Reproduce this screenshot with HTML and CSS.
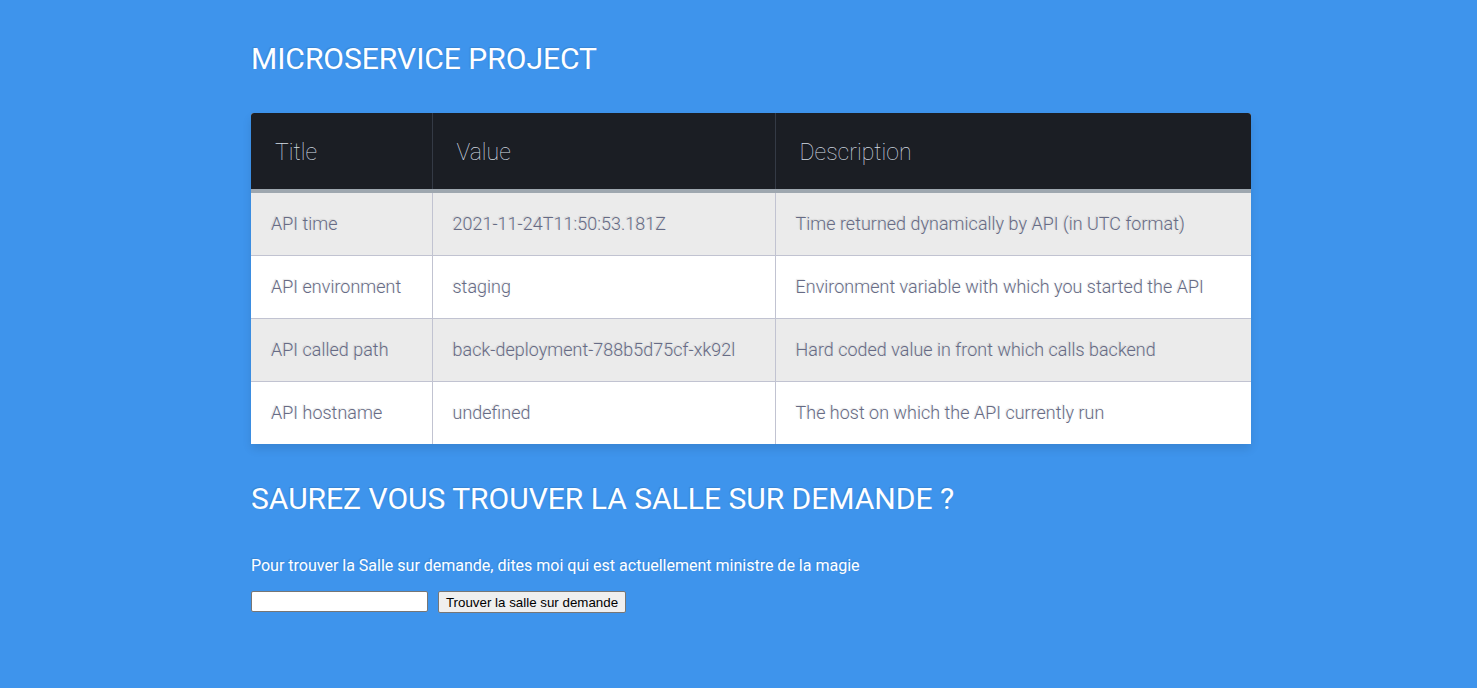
FILE: index.html
```html
<!DOCTYPE html>
<html lang="fr">
<head>
<meta charset="utf-8">
<title>Microservice project</title>
<link rel="stylesheet" href="styles.css">
</head>
<body>
<main class="container">
  <h1 class="page-title">Microservice project</h1>
  <table class="table-fill">
    <colgroup>
      <col class="col-title">
      <col class="col-value">
      <col class="col-desc">
    </colgroup>
    <thead>
      <tr>
        <th>Title</th>
        <th>Value</th>
        <th>Description</th>
      </tr>
    </thead>
    <tbody>
      <tr>
        <td>API time</td>
        <td>2021-11-24T11:50:53.181Z</td>
        <td>Time returned dynamically by API (in UTC format)</td>
      </tr>
      <tr>
        <td>API environment</td>
        <td>staging</td>
        <td>Environment variable with which you started the API</td>
      </tr>
      <tr>
        <td>API called path</td>
        <td>back-deployment-788b5d75cf-xk92l</td>
        <td>Hard coded value in front which calls backend</td>
      </tr>
      <tr>
        <td>API hostname</td>
        <td>undefined</td>
        <td>The host on which the API currently run</td>
      </tr>
    </tbody>
  </table>
  <h1 class="page-title second">Saurez vous trouver la salle sur demande ?</h1>
  <p class="intro">Pour trouver la Salle sur demande, dites moi qui est actuellement ministre de la magie</p>
  <form class="answer-form">
    <input class="answer-input" type="text">
    <button class="answer-button" type="button">Trouver la salle sur demande</button>
  </form>
</main>
</body>
</html>
```
FILE: styles.css
```css
html, body {
  margin: 0;
  padding: 0;
}

body {
  background-color: #3e94ec;
  font-family: "Roboto", "Liberation Sans", sans-serif;
  font-size: 16px;
  min-height: 688px;
}

.container {
  width: 1000px;
  margin-left: 251px;
  padding-top: 41px;
}

.page-title {
  margin: 0;
  font-size: 30px;
  font-weight: 400;
  line-height: 35px;
  color: #ffffff;
  text-transform: uppercase;
  text-shadow: -1px -1px 1px rgba(0, 0, 0, 0.1);
}

.page-title.second {
  margin-top: 37px;
}

.table-fill {
  margin-top: 37px;
  width: 1000px;
  table-layout: fixed;
  border-collapse: collapse;
  background: #ffffff;
  border-radius: 3px;
  box-shadow: 0 5px 10px rgba(0, 0, 0, 0.1);
}

.col-title { width: 181px; }
.col-value { width: 343px; }
.col-desc { width: 476px; }

.table-fill th {
  color: #d5dde5;
  background: #1b1e24;
  border-bottom: 4px solid #9ea7af;
  border-right: 1px solid #343a45;
  font-size: 23px;
  font-weight: 100;
  line-height: 28px;
  padding: 26px 24px 22px;
  text-align: left;
  vertical-align: middle;
  text-shadow: 0 1px 1px rgba(0, 0, 0, 0.1);
}

.table-fill th:first-child {
  border-top-left-radius: 3px;
}

.table-fill th:last-child {
  border-top-right-radius: 3px;
  border-right: none;
}

.table-fill tr {
  border-top: 1px solid #c1c3d1;
  color: #666b85;
}

.table-fill thead tr {
  border-top: none;
}

.table-fill td {
  background: #ffffff;
  padding: 20px;
  text-align: left;
  vertical-align: middle;
  font-size: 18px;
  font-weight: 300;
  line-height: 22px;
  color: #666b85;
  border-right: 1px solid #c1c3d1;
  text-shadow: -1px -1px 1px rgba(0, 0, 0, 0.1);
  white-space: nowrap;
}

.table-fill td:last-child {
  border-right: none;
}

.table-fill tbody tr:nth-child(odd) td {
  background: #ebebeb;
}

.intro {
  margin: 40px 0 0;
  color: #ffffff;
  font-size: 16px;
  line-height: 19px;
  font-weight: 400;
  text-shadow: -1px -1px 1px rgba(0, 0, 0, 0.1);
}

.answer-form {
  display: flex;
  align-items: flex-start;
  gap: 10px;
  margin-top: 16px;
}

.answer-input {
  box-sizing: border-box;
  width: 177px;
  height: 21px;
  margin: 0;
  padding: 1px 2px;
  border: 1px solid #767676;
  border-radius: 2px;
  background: #ffffff;
  font-family: "Liberation Sans", Arial, sans-serif;
  font-size: 13.33px;
}

.answer-button {
  box-sizing: border-box;
  width: 188px;
  height: 22px;
  margin: 0;
  padding: 1px 2px;
  border: 1px solid #767676;
  border-radius: 2px;
  background: #efefef;
  color: #000000;
  font-family: "Liberation Sans", Arial, sans-serif;
  font-size: 13.33px;
  white-space: nowrap;
  text-align: center;
}
```
